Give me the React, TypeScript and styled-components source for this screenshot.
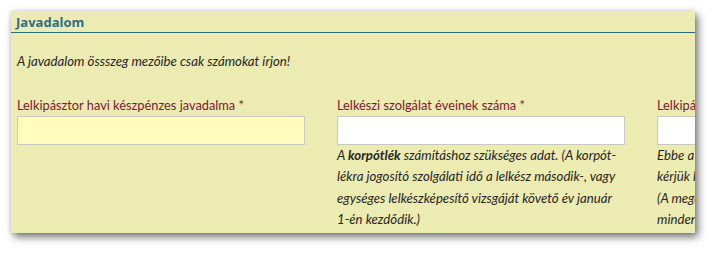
import React from "react";
import styled, { createGlobalStyle } from "styled-components";

const Global = createGlobalStyle`
  html, body { margin: 0; padding: 0; background: #ffffff; }
  body { font-family: Lato, "Open Sans", sans-serif; }
`;

const Page = styled.div`
  padding: 11px 19px 20px 11px;
`;

const Panel = styled.section`
  width: 684px;
  height: 222px;
  overflow: hidden;
  background: #ecebb2;
  box-shadow: 3px 4px 8px rgba(0, 0, 0, 0.55), 0 0 4px rgba(0, 0, 0, 0.12);
`;

const Header = styled.h2`
  margin: 0;
  padding: 2px 5px 0;
  height: 19px;
  font-family: "Open Sans", sans-serif;
  font-size: 13px;
  line-height: 18px;
  font-weight: 700;
  color: #2b6e87;
  border-bottom: 1px solid #2a6b7e;
`;

const Body = styled.div`
  padding: 0 6px;
`;

const Intro = styled.p`
  margin: 18px 0 0;
  font-size: 13.2px;
  line-height: 20px;
  font-style: italic;
  color: #262626;
`;

const Fields = styled.div`
  display: flex;
  gap: 32px;
  margin-top: 25px;
`;

const Field = styled.div`
  flex: 0 0 288px;
  display: flex;
  flex-direction: column;
`;

const Label = styled.label`
  font-size: 12.8px;
  line-height: 18px;
  color: #7b1a30;
  white-space: nowrap;
  margin-bottom: 2px;
`;

const Input = styled.input<{ $highlight?: boolean }>`
  box-sizing: border-box;
  width: 288px;
  height: 29px;
  margin: 0;
  border: 1px solid #c9c9c4;
  background: ${(p) => (p.$highlight ? "#fffcbd" : "#ffffff")};
  outline: none;
`;

const Help = styled.p`
  margin: 0;
  font-size: 13.2px;
  line-height: 21.4px;
  font-style: italic;
  color: #262626;
  white-space: nowrap;
  b { font-weight: 700; }
`;

export default function App() {
  return (
    <>
      <Global />
      <Page>
        <Panel>
          <Header>Javadalom</Header>
          <Body>
            <Intro>A javadalom össszeg mezőibe csak számokat írjon!</Intro>
            <Fields>
              <Field>
                <Label>Lelkipásztor havi készpénzes javadalma *</Label>
                <Input $highlight />
              </Field>
              <Field>
                <Label>Lelkészi szolgálat éveinek száma *</Label>
                <Input />
                <Help>
                  A <b>korpótlék</b> számításhoz szükséges adat. (A korpót-
                  <br />
                  lékra jogosító szolgálati idő a lelkész második-, vagy
                  <br />
                  egységes lelkészképesítő vizsgáját követő év január
                  <br />
                  1-én kezdődik.)
                </Help>
              </Field>
              <Field>
                <Label>Lelkipásztor egyéb juttatásai</Label>
                <Input />
                <Help>
                  Ebbe a mezőbe a természetbeni juttatásokat
                  <br />
                  kérjük beírni, forintban kifejezve.
                  <br />
                  (A megállapított összeget havonta,
                  <br />
                  minden hónap első napján kell folyósítani.)
                  <br />
                  Ez az adat nem kötelező.
                </Help>
              </Field>
            </Fields>
          </Body>
        </Panel>
      </Page>
    </>
  );
}
